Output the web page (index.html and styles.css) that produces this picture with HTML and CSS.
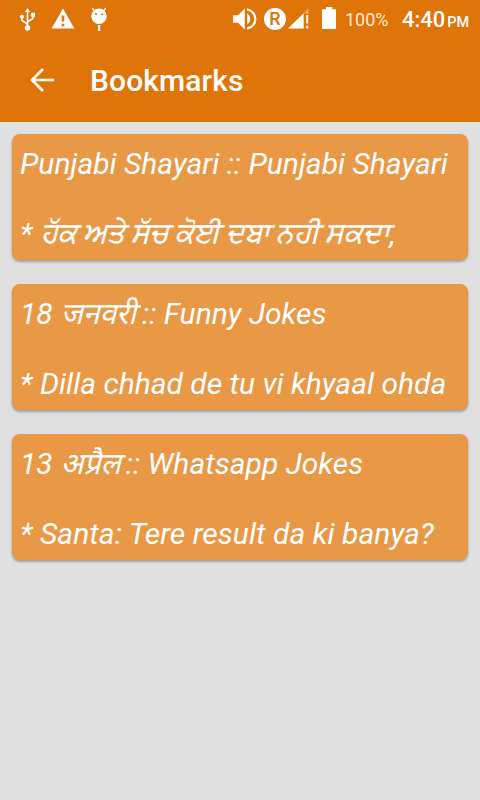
FILE: index.html
```html
<!DOCTYPE html>
<html lang="en">
<head>
    <meta charset="utf-8">
    <title>Bookmarks</title>
    <link rel="stylesheet" href="styles.css">
</head>
<body>
    <header>
        <div class="status">
            <svg class="usb" width="16" height="24" viewBox="0 0 16 24" fill="none" stroke="#fff" stroke-width="1.6">
                <path d="M7.5 19V3M7.5 16L2 12.5V9M7.5 14L13 10.5V7"/>
                <path d="M7.5 0L10.2 4H4.8zM11 4.7h4V8.7h-4z" fill="#fff" stroke="none"/>
                <circle cx="2" cy="8.7" r="2" fill="#fff" stroke="none"/>
                <circle cx="7.5" cy="20" r="2.8" fill="#fff" stroke="none"/>
            </svg>
            <svg class="warn" width="24" height="22" viewBox="0 0 24 22">
                <path d="M12 .5L23.4 20.5H.6z" fill="#fff"/>
                <path d="M10.7 7.5h2.6v6h-2.6zM10.7 15.8h2.6v2.4h-2.6z" fill="#df7408"/>
            </svg>
            <svg class="droid" width="16" height="24" viewBox="0 0 16 24">
                <path d="M3.5 4L1.3 1M12.5 4l2.2-3" stroke="#fff" stroke-width="1.3"/>
                <circle cx="8" cy="9.3" r="7.7" fill="#fff"/>
                <path d="M7 18h2.2v6H7z" fill="#fff"/>
                <path d="M4 6.5h2v1.5H4zM10.3 6.5h2v1.5h-2z" fill="#df7408"/>
            </svg>
            <svg class="sound" width="24" height="22" viewBox="0 0 24 22">
                <path d="M0 7.3h5L11.8.6v20.8L5 14.7H0z" fill="#fff"/>
                <path d="M14.2 5.6c4 2 4 8.8 0 10.8z" fill="#fff"/>
                <path d="M14 1.4c11 2.4 11 16.8 0 19.2" fill="none" stroke="#fff" stroke-width="2.4"/>
            </svg>
            <span class="roaming">R</span>
            <svg class="signal" width="21" height="22" viewBox="0 0 21 22">
                <path d="M20.5 0v4.7h-4.3zM17 4.5h3.5V6H17z" fill="#eba866"/>
                <path d="M15.7 5.2V20.5H0z" fill="#fff"/>
                <path d="M18.2 7h2v8.5h-2zM18.2 17.8h2v2.7h-2z" fill="#fff"/>
            </svg>
            <svg class="battery" width="14" height="22" viewBox="0 0 14 22">
                <path d="M4 0h6.3v2.2H14V22H0V2.2h4z" fill="#fff"/>
            </svg>
            <span class="percent">100%</span>
            <span class="clock">4:40<small>PM</small></span>
        </div>
        <div class="toolbar">
            <svg class="back" width="24" height="24" viewBox="0 0 24 24" fill="none" stroke="#fff" stroke-width="2.6">
                <path d="M24 12H2M13 1L2 12l11 11"/>
            </svg>
            <h1>Bookmarks</h1>
        </div>
    </header>

    <main class="list">
        <div class="card">
            <p>Punjabi Shayari :: Punjabi Shayari</p>
            <p>* <span class="gurmukhi">ਹੱਕ ਅਤੇ ਸੱਚ ਕੋਈ ਦਬਾ ਨਹੀ ਸਕਦਾ</span>,</p>
        </div>
        <div class="card">
            <p>18 <span class="devanagari">जनवरी</span> :: Funny Jokes</p>
            <p>* Dilla chhad de tu vi khyaal ohda</p>
        </div>
        <div class="card">
            <p>13 <span class="devanagari april">अप्रैल</span> :: Whatsapp Jokes</p>
            <p class="wide">* Santa: Tere result da ki banya?</p>
        </div>
    </main>
</body>
</html>
```
FILE: styles.css
```css
body {
    margin: 0;
    min-height: 800px;
    background: #e0e0e0;
    color: #fff;
    font-family: Roboto, "Noto Sans", sans-serif;
}

header {
    height: 122px;
    background: #df7408;
}

.status {
    display: flex;
    align-items: flex-start;
    height: 38px;
    white-space: nowrap;
}

.status > * {
    flex: none;
}

.usb {
    margin: 8px 0 0 20px;
}

.warn {
    margin: 8px 0 0 15px;
}

.droid {
    margin: 7px 0 0 16px;
}

.sound {
    margin: 8px 0 0 126px;
}

.roaming {
    width: 22px;
    height: 22px;
    margin: 8px 0 0 7px;
    border-radius: 50%;
    background: #fff;
    color: #df7408;
    font-size: 18px;
    font-weight: 500;
    line-height: 22px;
    text-align: center;
}

.signal {
    margin: 8px 0 0 2px;
}

.battery {
    margin: 7px 0 0 13px;
}

.percent {
    width: 57px;
    margin: 9px 0 0 9px;
    font-size: 18px;
    line-height: 22px;
    color: #fdebd9;
}

.clock {
    margin-top: 7px;
    font-size: 22px;
    font-weight: 500;
    line-height: 26px;
}

.clock small {
    margin-left: 2px;
    font-size: 14.5px;
}

.toolbar {
    display: flex;
    align-items: center;
    height: 84px;
}

.back {
    margin-left: 30px;
}

h1 {
    margin: 2px 0 0 36px;
    font-size: 30px;
    font-weight: 500;
    line-height: 36px;
    letter-spacing: .1px;
}

.list {
    display: flex;
    flex-direction: column;
    gap: 24px;
    padding: 12px;
}

.card {
    display: flex;
    flex-direction: column;
    gap: 35px;
    box-sizing: border-box;
    height: 126px;
    padding: 12px 8px 9px;
    border-radius: 8px;
    background: #e99846;
    box-shadow: 0 2px 3px rgba(0, 0, 0, .3);
}

.card p {
    height: 35px;
    margin: 0;
    font-size: 30px;
    font-style: italic;
    line-height: 35px;
    white-space: nowrap;
}

.card .wide {
    letter-spacing: .04px;
}

.gurmukhi {
    margin-left: 1px;
    font-size: 28px;
    line-height: 1;
    vertical-align: 2px;
    word-spacing: -.9px;
    -webkit-text-stroke: .6px #fff;
}

/* no italic face for this script, so slant it */
.devanagari {
    display: inline-block;
    margin-right: -1px;
    line-height: 1;
    transform: translateX(3px) skewX(-14deg);
}

.april {
    margin-right: -2px;
}
```
